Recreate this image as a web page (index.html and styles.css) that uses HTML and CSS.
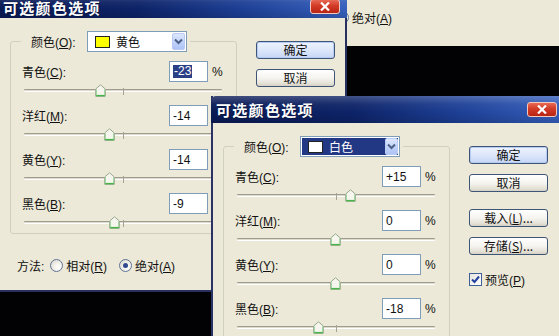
FILE: index.html
```html
<!DOCTYPE html>
<html lang="zh-CN">
<head>
<meta charset="utf-8">
<title>可选颜色选项</title>
<link rel="stylesheet" href="styles.css">
</head>
<body>
<div class="desktop">

  <div class="win win-back">
    <span class="radio radio--on"></span><span class="opt-text">绝对(<u>A</u>)</span>
  </div>

  <div class="win dialog dlg-1">
    <div class="titlebar">
      <span class="title">可选颜色选项</span>
      <span class="close-btn"><svg width="10" height="9" viewBox="0 0 10 9"><path d="M1 0.5 L9 8.5 M9 0.5 L1 8.5" stroke="#fff" stroke-width="2.2"/></svg></span>
    </div>
    <div class="dlg-body">
      <div class="main">
        <fieldset class="group">
          <legend class="legend">
            <span class="legend-inner">
              <span class="legend-label">颜色(<u>O</u>):</span>
              <span class="combo">
                <span class="swatch swatch--yellow"></span>
                <span class="combo-text">黄色</span>
                <span class="combo-btn"><svg width="9" height="7" viewBox="0 0 9 7"><path d="M1 1.5 L4.5 5 L8 1.5" fill="none" stroke="#4d6185" stroke-width="2"/></svg></span>
              </span>
            </span>
          </legend>
          <div class="fields">
            <div class="field">
              <div class="field-row"><span class="lbl">青色(<u>C</u>):</span><span class="num"><span class="sel">-23</span></span><span class="pct">%</span></div>
              <div class="slider"><span class="track"></span><span class="tick"></span><span class="thumb" style="left:71px"></span></div>
            </div>
            <div class="field">
              <div class="field-row"><span class="lbl">洋红(<u>M</u>):</span><span class="num">-14</span><span class="pct">%</span></div>
              <div class="slider"><span class="track"></span><span class="tick"></span><span class="thumb" style="left:80px"></span></div>
            </div>
            <div class="field">
              <div class="field-row"><span class="lbl">黄色(<u>Y</u>):</span><span class="num">-14</span><span class="pct">%</span></div>
              <div class="slider"><span class="track"></span><span class="tick"></span><span class="thumb" style="left:80px"></span></div>
            </div>
            <div class="field">
              <div class="field-row"><span class="lbl">黑色(<u>B</u>):</span><span class="num">-9</span><span class="pct">%</span></div>
              <div class="slider"><span class="track"></span><span class="tick"></span><span class="thumb" style="left:85px"></span></div>
            </div>
          </div>
        </fieldset>
        <div class="method">
          <span class="method-label">方法:</span>
          <span class="radio"></span><span class="opt-text">相对(<u>R</u>)</span>
          <span class="radio radio--on radio--gap"></span><span class="opt-text">绝对(<u>A</u>)</span>
        </div>
      </div>
      <div class="buttons">
        <span class="btn btn--default">确定</span>
        <span class="btn">取消</span>
      </div>
    </div>
  </div>

  <div class="win dialog dlg-2">
    <div class="titlebar">
      <span class="title">可选颜色选项</span>
      <span class="close-btn"><svg width="10" height="9" viewBox="0 0 10 9"><path d="M1 0.5 L9 8.5 M9 0.5 L1 8.5" stroke="#fff" stroke-width="2.2"/></svg></span>
    </div>
    <div class="dlg-body">
      <div class="main">
        <fieldset class="group">
          <legend class="legend">
            <span class="legend-inner">
              <span class="legend-label">颜色(<u>O</u>):</span>
              <span class="combo combo--focus">
                <span class="swatch swatch--white"></span>
                <span class="combo-text">白色</span>
                <span class="combo-btn"><svg width="9" height="7" viewBox="0 0 9 7"><path d="M1 1.5 L4.5 5 L8 1.5" fill="none" stroke="#4d6185" stroke-width="2"/></svg></span>
              </span>
            </span>
          </legend>
          <div class="fields">
            <div class="field">
              <div class="field-row"><span class="lbl">青色(<u>C</u>):</span><span class="num">+15</span><span class="pct">%</span></div>
              <div class="slider"><span class="track"></span><span class="tick"></span><span class="thumb" style="left:108px"></span></div>
            </div>
            <div class="field">
              <div class="field-row"><span class="lbl">洋红(<u>M</u>):</span><span class="num">0</span><span class="pct">%</span></div>
              <div class="slider"><span class="track"></span><span class="tick"></span><span class="thumb" style="left:93px"></span></div>
            </div>
            <div class="field">
              <div class="field-row"><span class="lbl">黄色(<u>Y</u>):</span><span class="num">0</span><span class="pct">%</span></div>
              <div class="slider"><span class="track"></span><span class="tick"></span><span class="thumb" style="left:93px"></span></div>
            </div>
            <div class="field">
              <div class="field-row"><span class="lbl">黑色(<u>B</u>):</span><span class="num">-18</span><span class="pct">%</span></div>
              <div class="slider"><span class="track"></span><span class="tick"></span><span class="thumb" style="left:76px"></span></div>
            </div>
          </div>
        </fieldset>
      </div>
      <div class="buttons">
        <span class="btn btn--default">确定</span>
        <span class="btn">取消</span>
        <span class="btn btn--sep">载入(<u>L</u>)...</span>
        <span class="btn">存储(<u>S</u>)...</span>
        <span class="check-row"><span class="checkbox"><svg width="9" height="9" viewBox="0 0 9 9"><path d="M1 4.5 L3.5 7 L8 1.5" fill="none" stroke="#2341a0" stroke-width="2"/></svg></span><span class="opt-text">预览(<u>P</u>)</span></span>
      </div>
    </div>
  </div>

</div>
</body>
</html>
```

FILE: styles.css
```css
* { box-sizing: border-box; }

html, body {
  margin: 0;
  padding: 0;
  background: #000;
}

body {
  font-family: "Liberation Sans", "Noto Sans CJK SC", sans-serif;
  font-size: 12px;
  color: #111;
}

u { text-decoration: underline; text-underline-offset: 1px; }

.desktop {
  position: relative;
  width: 559px;
  height: 336px;
  overflow: hidden;
  background: #020204;
}

.win {
  position: absolute;
  background: #ece9d8;
}

/* window behind, top right */
.win-back {
  left: 300px;
  top: -20px;
  width: 280px;
  height: 66px;
  display: flex;
  align-items: center;
  padding: 0 0 0 36px;
}
.win-back .radio { margin-top: 8px; }
.win-back .opt-text { margin-top: 8px; }

/* dialogs */
.dialog {
  display: flex;
  flex-direction: column;
  border: 2px solid #27305f;
  border-top: 0;
}

.dlg-1 {
  left: -2px;
  top: -5px;
  width: 349px;
  height: 297px;
}

.dlg-2 {
  left: 211px;
  top: 96px;
  width: 353px;
  height: 262px;
  border-left-color: #2a3366;
}

.titlebar {
  height: 27px;
  margin: 0 -2px;
  padding: 0 7px 0 5px;
  display: flex;
  align-items: center;
  justify-content: space-between;
  border-radius: 5px 5px 0 0;
  background:
    linear-gradient(180deg, rgba(255,255,255,0.22) 0%, rgba(255,255,255,0.05) 30%, rgba(0,0,0,0) 60%, rgba(0,0,0,0.12) 100%),
    linear-gradient(90deg, #0a1a55 0%, #0d2367 40%, #1d3f95 70%, #3660bd 100%);
}
.dlg-1 .titlebar {
  height: 23px;
  padding-top: 3px;
}
.dlg-1 .close-btn { margin-top: -3px; }

.title {
  color: #fff;
  font-family: "Noto Sans CJK SC", sans-serif;
  font-weight: 700;
  font-size: 15px;
  letter-spacing: 1.3px;
  line-height: 16px;
  text-shadow: 1px 1px 0 #0a1440;
}

.close-btn {
  width: 30px;
  height: 15px;
  display: flex;
  align-items: center;
  justify-content: center;
  border: 1px solid #f3c8bd;
  border-radius: 3px;
  background: linear-gradient(180deg, #e86a55 0%, #d23b26 45%, #b92414 100%);
}

.dlg-body {
  flex: 1;
  display: flex;
  align-items: flex-start;
  padding-top: 13px;
}

.main {
  margin-left: 10px;
  width: 227px;
  flex: none;
}

.group {
  margin: 0;
  padding: 9px 11px 4px;
  border: 1px solid #d0d0bf;
  border-radius: 3px;
  min-width: 0;
}

.legend {
  padding: 0 3px 0 10px;
  margin-left: -1px;
}

.legend-inner {
  display: flex;
  align-items: center;
  height: 21px;
}

.legend-label {
  width: 56px;
  flex: none;
}

.combo {
  width: 100px;
  height: 21px;
  display: flex;
  align-items: center;
  border: 1px solid #7f9db9;
  background: #fff;
  padding: 0 1px 0 7px;
}

.combo--focus {
  background: #233884;
  box-shadow: inset 0 0 0 1px #fff, inset 0 0 0 2px #233884;
}
.combo--focus .combo-text { color: #fff; }

.swatch {
  width: 15px;
  height: 12px;
  border: 1px solid #222;
  flex: none;
}
.swatch--yellow { background: #ffff00; }
.swatch--white { background: #fff; }

.combo-text {
  margin-left: 6px;
  flex: 1;
}

.combo-btn {
  width: 13px;
  height: 17px;
  display: flex;
  align-items: center;
  justify-content: center;
  border: 1px solid #b9cbf3;
  border-radius: 2px;
  background: linear-gradient(180deg, #dce6fd 0%, #c3d4fb 50%, #aec3f5 100%);
}

.fields {
  display: flex;
  flex-direction: column;
  gap: 8px;
}

.field-row {
  display: flex;
  align-items: center;
  height: 21px;
}

.lbl { flex: 1; }

.num {
  width: 39px;
  height: 21px;
  border: 1px solid #7f9db9;
  background: #fff;
  display: flex;
  align-items: center;
  padding-left: 3px;
}

.sel {
  background: #2b3f86;
  color: #fff;
  padding: 0 1px;
  line-height: 13px;
}

.pct {
  width: 17px;
  padding-left: 4px;
  flex: none;
}

.slider {
  position: relative;
  margin: 2px 0 0 2px;
  width: 198px;
  height: 13px;
}

.track {
  position: absolute;
  left: 0;
  right: 0;
  top: 5px;
  height: 3px;
  border-top: 1px solid #9e9c8d;
  border-bottom: 1px solid #ffffff;
  background: #dedbcc;
  border-radius: 1px;
}

.tick {
  position: absolute;
  left: 99px;
  top: 4px;
  width: 1px;
  height: 7px;
  background: #a5a393;
}

.thumb {
  position: absolute;
  top: 0;
  width: 11px;
  height: 13px;
  background:
    url("data:image/svg+xml;utf8,<svg xmlns='http://www.w3.org/2000/svg' width='11' height='13' viewBox='0 0 11 13'><path d='M5.5 0.8 L10.3 5 L10.3 12.3 L0.7 12.3 L0.7 5 Z' fill='%23f6f6ef' stroke='%2396a88c' stroke-width='1'/><path d='M1.2 11.6 L9.8 11.6' stroke='%2347b448' stroke-width='1.4'/><path d='M1.5 5.4 L1.5 11 M9.5 5.4 L9.5 11' stroke='%238fd68f' stroke-width='0.8'/></svg>") no-repeat;
}

.method {
  display: flex;
  align-items: center;
  margin-top: 23px;
  padding-left: 7px;
  height: 16px;
}

.method-label { margin-right: 6px; }

.radio {
  width: 13px;
  height: 13px;
  border-radius: 50%;
  border: 1px solid #5f7396;
  background: radial-gradient(circle at 65% 65%, #ffffff 0%, #f2f1ea 40%, #d4d2c6 100%);
  display: inline-flex;
  align-items: center;
  justify-content: center;
  flex: none;
  margin-right: 3px;
}
.radio--on::after {
  content: "";
  width: 5px;
  height: 5px;
  border-radius: 50%;
  background: #30498f;
}
.radio--gap { margin-left: 12px; }

.buttons {
  margin: 10px 0 0 19px;
  width: 79px;
  display: flex;
  flex-direction: column;
  gap: 10px;
  flex: none;
}

.btn {
  height: 18px;
  display: flex;
  align-items: center;
  justify-content: center;
  border: 1px solid #3f5577;
  border-radius: 3px;
  background: linear-gradient(180deg, #ffffff 0%, #f5f4ef 50%, #e3e0d5 85%, #d4cfc2 100%);
  font-family: "Noto Sans CJK SC", sans-serif;
  font-size: 12px;
  line-height: 14px;
}
.btn--default {
  background: linear-gradient(180deg, #eef3fd 0%, #dde7fa 50%, #c6d6f5 100%);
  box-shadow: inset 0 0 0 1px #b5cbf4;
}
.btn--sep { margin-top: 7px; }

.check-row {
  margin-top: 6px;
  display: flex;
  align-items: center;
}

.checkbox {
  width: 13px;
  height: 13px;
  border: 1px solid #3f5f9a;
  background: linear-gradient(135deg, #e6e5dc, #ffffff);
  display: flex;
  align-items: center;
  justify-content: center;
  margin-right: 3px;
}

.opt-text { white-space: nowrap; }
```
